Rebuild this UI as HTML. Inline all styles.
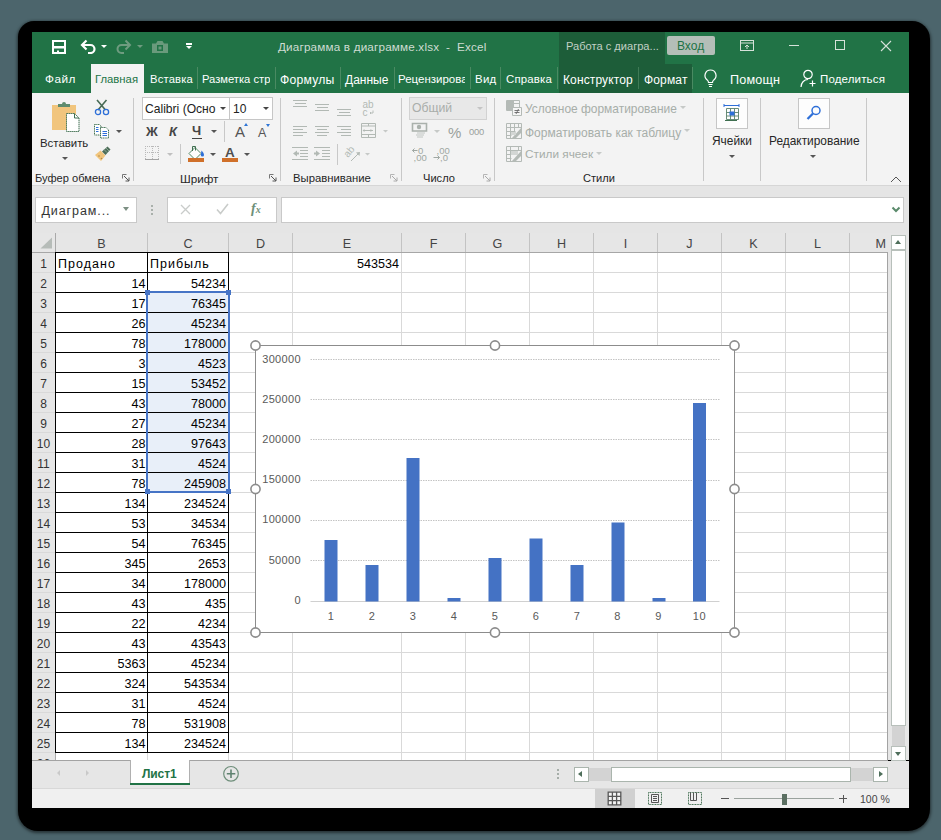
<!DOCTYPE html>
<html><head><meta charset="utf-8">
<style>
*{margin:0;padding:0;box-sizing:border-box}
html,body{width:941px;height:840px;overflow:hidden;background:#4c656c;font-family:"Liberation Sans",sans-serif;position:relative}
.a{position:absolute}
.t{position:absolute;white-space:nowrap;line-height:1}
#shadow{left:17.5px;top:21px;width:912px;height:810px;background:#000;border-radius:16px 18px 22px 20px;box-shadow:0 1px 3px 1px rgba(0,0,0,.5)}
</style></head><body>
<div id="shadow" class="a"></div>
<!-- title bar + tabs -->
<div class="a" style="left:32px;top:32px;width:877px;height:61px;background:#217346"></div>
<div class="a" style="left:559px;top:32px;width:106px;height:32px;background:#1d5d39"></div>
<div class="a" style="left:559px;top:64px;width:133px;height:29px;background:#1d5d39"></div>
<!-- ===== TITLE BAR ===== -->
<svg class="a" style="left:51px;top:39px" width="17" height="16" viewBox="0 0 17 16">
 <path d="M2 2h12v12H2z" fill="none" stroke="#fff" stroke-width="2"/>
 <rect x="1" y="7" width="14" height="2.5" fill="#fff"/>
 <rect x="6" y="11.5" width="2" height="3" fill="#fff"/>
</svg>
<svg class="a" style="left:80px;top:39px" width="17" height="15" viewBox="0 0 17 15">
 <path d="M2 6h8.5a4 4 0 0 1 0 8H8" fill="none" stroke="#fff" stroke-width="2.2"/>
 <path d="M6.5 1.5L2 6l4.5 4.5" fill="none" stroke="#fff" stroke-width="2.2"/>
</svg>
<div class="a" style="left:101px;top:45px;width:0;height:0;border-left:3px solid transparent;border-right:3px solid transparent;border-top:3px solid #fff"></div>
<svg class="a" style="left:115px;top:39px" width="17" height="15" viewBox="0 0 17 15">
 <path d="M15 6H6.5a4 4 0 0 0 0 8H9" fill="none" stroke="#6f9c80" stroke-width="2"/>
 <path d="M10.5 1.5L15 6l-4.5 4.5" fill="none" stroke="#6f9c80" stroke-width="2"/>
</svg>
<div class="a" style="left:137px;top:45px;width:0;height:0;border-left:3px solid transparent;border-right:3px solid transparent;border-top:3px solid #6f9c80"></div>
<svg class="a" style="left:151px;top:40px" width="18" height="14" viewBox="0 0 18 14">
 <path d="M1 3.5h4l1.5-2.5h5l1.5 2.5h4v9.5h-16z" fill="#6a9a7c"/>
 <rect x="6" y="5" width="6" height="6" fill="#217346"/><rect x="7.5" y="6.5" width="3" height="3" fill="#6a9a7c"/>
</svg>
<div class="a" style="left:186px;top:43px;width:6px;height:1.5px;background:#fff"></div>
<div class="a" style="left:186px;top:46px;width:0;height:0;border-left:3px solid transparent;border-right:3px solid transparent;border-top:3.5px solid #fff"></div>

<div class="t" style="left:278px;top:41px;font-size:11.7px;letter-spacing:0.18px;color:#cfdcd3">Диаграмма в диаграмме.xlsx&nbsp; - &nbsp;Excel</div>
<div class="t" style="left:566px;top:41px;font-size:11.1px;color:#c2d0c6">Работа с диагра...</div>
<div class="a" style="left:667px;top:36px;width:48px;height:19px;background:#b4beb8;border-radius:2px"></div>
<div class="t" style="left:677px;top:40px;font-size:12px;color:#217346">Вход</div>
<!-- ribbon display options -->
<svg class="a" style="left:740px;top:40px" width="15" height="12" viewBox="0 0 15 12">
 <rect x="0.5" y="0.5" width="13" height="10" fill="none" stroke="#d6e2da" stroke-width="1"/>
 <path d="M0.5 3h13" stroke="#d6e2da"/><path d="M7 9V5M5 7l2-2 2 2" fill="none" stroke="#d6e2da"/>
</svg>
<div class="a" style="left:789px;top:45px;width:10px;height:1px;background:#d6e2da"></div>
<div class="a" style="left:835px;top:40px;width:10px;height:10px;border:1px solid #d6e2da"></div>
<svg class="a" style="left:880px;top:40px" width="12" height="12" viewBox="0 0 12 12">
 <path d="M1 1l10 10M11 1L1 11" stroke="#d6e2da" stroke-width="1.1"/>
</svg>

<!-- ===== TABS ===== -->
<div class="a" style="left:91px;top:64px;width:53px;height:29px;background:#f3f3f3"></div>
<div class="t" style="left:45px;top:74px;font-size:11.8px;letter-spacing:0.5px;color:#fff">Файл</div>
<div class="t" style="left:95px;top:74px;font-size:11.3px;color:#217346">Главная</div>
<div class="t" style="left:150px;top:74px;font-size:11.2px;letter-spacing:0.2px;color:#fff">Вставка</div>
<div class="a" style="left:202px;top:64px;width:68px;height:29px;overflow:hidden"><div class="t" style="left:0;top:10px;font-size:11.2px;color:#fff">Разметка страницы</div></div>
<div class="t" style="left:280px;top:74px;font-size:12.2px;letter-spacing:0.2px;color:#fff">Формулы</div>
<div class="t" style="left:345px;top:74px;font-size:12px;color:#fff">Данные</div>
<div class="a" style="left:398px;top:64px;width:67px;height:29px;overflow:hidden"><div class="t" style="left:0;top:10px;font-size:11.5px;color:#fff">Рецензирование</div></div>
<div class="t" style="left:475px;top:74px;font-size:11.4px;letter-spacing:0.3px;color:#fff">Вид</div>
<div class="t" style="left:506px;top:74px;font-size:11.4px;letter-spacing:0.2px;color:#fff">Справка</div>
<div class="t" style="left:563px;top:74px;font-size:12px;letter-spacing:0.12px;color:#fff">Конструктор</div>
<div class="t" style="left:644px;top:74px;font-size:12px;letter-spacing:0.15px;color:#fff">Формат</div>
<div class="a" style="left:197px;top:67px;width:1px;height:22px;background:#4a8a62"></div>
<div class="a" style="left:275px;top:67px;width:1px;height:22px;background:#4a8a62"></div>
<div class="a" style="left:340px;top:67px;width:1px;height:22px;background:#4a8a62"></div>
<div class="a" style="left:394px;top:67px;width:1px;height:22px;background:#4a8a62"></div>
<div class="a" style="left:470px;top:67px;width:1px;height:22px;background:#4a8a62"></div>
<div class="a" style="left:500px;top:67px;width:1px;height:22px;background:#4a8a62"></div>
<div class="a" style="left:557px;top:67px;width:1px;height:22px;background:#4a8a62"></div>
<div class="a" style="left:638px;top:67px;width:1px;height:22px;background:#3f7a56"></div>
<div class="a" style="left:692px;top:67px;width:1px;height:22px;background:#4a8a62"></div>
<!-- lightbulb -->
<svg class="a" style="left:703px;top:69px" width="15" height="19" viewBox="0 0 15 19">
 <path d="M7.5 1a5.5 5.5 0 0 0-3.3 9.9c.8.7 1.3 1.6 1.3 2.6h4c0-1 .5-1.9 1.3-2.6A5.5 5.5 0 0 0 7.5 1z" fill="none" stroke="#fff" stroke-width="1.2"/>
 <path d="M5.5 15.5h4M6 17.5h3" stroke="#fff" stroke-width="1.1"/>
</svg>
<div class="t" style="left:730px;top:74px;font-size:12.6px;letter-spacing:0.2px;color:#fff">Помощн</div>
<!-- person -->
<svg class="a" style="left:800px;top:69px" width="17" height="19" viewBox="0 0 17 19">
 <circle cx="8" cy="5.5" r="4.2" fill="none" stroke="#fff" stroke-width="1.2"/>
 <path d="M1 18c0-4 3-7.5 7-7.5" fill="none" stroke="#fff" stroke-width="1.2"/>
 <path d="M12.5 11.5v6M9.5 14.5h6" stroke="#fff" stroke-width="1.2"/>
</svg>
<div class="t" style="left:820px;top:74px;font-size:11.5px;letter-spacing:0.15px;color:#fff">Поделиться</div>

<!-- ribbon -->
<div class="a" style="left:32px;top:93px;width:877px;height:93px;background:#f3f3f3;border-bottom:1px solid #d6d6d6"></div>
<!-- ===== RIBBON: Clipboard ===== -->
<svg class="a" style="left:50px;top:100px" width="34" height="34" viewBox="0 0 34 34">
 <rect x="2" y="5" width="24" height="25" fill="#f1c57d"/>
 <path d="M8 4h4a2 2 0 0 1 4 0h4v3H8z" fill="#5e8c6e"/>
 <path d="M16.5 13.5h8l4.5 4.5v13.5h-12.5z" fill="#fff" stroke="#3f6f50" stroke-width="1" stroke-dasharray="1.4 0.6"/>
 <path d="M24.5 13.5v4.5h4.5" fill="none" stroke="#3f6f50" stroke-width="1"/>
</svg>
<div class="t" style="left:40px;top:138px;font-size:11.4px;color:#262626">Вставить</div>
<div class="a" style="left:62px;top:157px;border-left:3px solid transparent;border-right:3px solid transparent;border-top:3px solid #555"></div>
<svg class="a" style="left:93px;top:99px" width="18" height="17" viewBox="0 0 18 17">
 <path d="M4 1l8.5 10M13.5 1L5 11" stroke="#486b55" stroke-width="1.6"/>
 <circle cx="5" cy="13" r="2.6" fill="none" stroke="#2e6fd8" stroke-width="1.3"/>
 <circle cx="13" cy="13" r="2.6" fill="none" stroke="#2e6fd8" stroke-width="1.3"/>
</svg>
<svg class="a" style="left:93px;top:123px" width="18" height="16" viewBox="0 0 18 16">
 <path d="M1.5 1.5h5l1.5 1.5v9h-6.5z" fill="#fff" stroke="#3f6f50" stroke-dasharray="1.2 0.6"/>
 <path d="M7.5 4.5h5.5l2.5 2.5v8h-8z" fill="#fff" stroke="#3f6f50" stroke-dasharray="1.2 0.6"/>
 <path d="M3 4.5h2.5M3 6.5h2.5M3 8.5h2.5" stroke="#2e6fd8"/>
 <path d="M9.5 8.5h4.5M9.5 10.5h4.5M9.5 12.5h4.5" stroke="#2e6fd8"/>
</svg>
<div class="a" style="left:116px;top:130px;border-left:3px solid transparent;border-right:3px solid transparent;border-top:3px solid #555"></div>
<svg class="a" style="left:94px;top:146px" width="17" height="16" viewBox="0 0 17 16">
 <path d="M1 9l5.5-4.5 5 5L7 15z" fill="#f1c57d"/>
 <path d="M8 5.5l5.5-5 3 3-5 5.5z" fill="#4d6e59"/>
 <path d="M10 3.5l3 3M12 2l3 3" stroke="#9db5a5" stroke-width="0.8"/>
 <circle cx="5" cy="10" r="0.8" fill="#b08a4a"/><circle cx="7.5" cy="12.5" r="0.8" fill="#b08a4a"/>
</svg>
<div class="t" style="left:35px;top:173px;font-size:11.1px;color:#262626">Буфер обмена</div>
<svg class="a" style="left:122px;top:174px" width="8" height="8" viewBox="0 0 8 8">
 <path d="M0.5 0.5h4M0.5 0.5v4" stroke="#777" fill="none"/><path d="M2 2l5 5M7 3.5V7H3.5" stroke="#555" fill="none"/>
</svg>
<div class="a" style="left:133px;top:98px;width:1px;height:83px;background:#c8c8c8"></div>

<!-- ===== RIBBON: Font ===== -->
<div class="a" style="left:142px;top:97px;width:88px;height:23px;background:#fff;border:1px solid #c6c6c6"></div>
<div class="a" style="left:229px;top:97px;width:44px;height:23px;background:#fff;border:1px solid #c6c6c6"></div>
<div class="t" style="left:145px;top:103px;font-size:12.1px;color:#222">Calibri (Осно</div>
<div class="t" style="left:233px;top:103px;font-size:12px;color:#222">10</div>
<div class="a" style="left:220px;top:107px;border-left:3px solid transparent;border-right:3px solid transparent;border-top:3px solid #444"></div>
<div class="a" style="left:263px;top:107px;border-left:3px solid transparent;border-right:3px solid transparent;border-top:3px solid #444"></div>
<div class="t" style="left:146px;top:125px;font-size:13px;font-weight:bold;color:#454545">Ж</div>
<div class="t" style="left:169px;top:125px;font-size:13px;font-weight:bold;font-style:italic;color:#454545">К</div>
<div class="t" style="left:192px;top:124px;font-size:13px;font-weight:bold;color:#454545">Ч</div>
<div class="a" style="left:192px;top:138px;width:10px;height:1px;background:#454545"></div>
<div class="a" style="left:211px;top:130px;border-left:3px solid transparent;border-right:3px solid transparent;border-top:3px solid #555"></div>
<div class="a" style="left:224px;top:121px;width:1px;height:21px;background:#c8c8c8"></div>
<div class="t" style="left:235px;top:124px;font-size:15px;color:#555">A</div>
<div class="a" style="left:244px;top:123px;border-left:2.5px solid transparent;border-right:2.5px solid transparent;border-bottom:3px solid #2e75d6"></div>
<div class="t" style="left:258px;top:127px;font-size:12.5px;color:#555">A</div>
<div class="a" style="left:266px;top:124px;border-left:2.5px solid transparent;border-right:2.5px solid transparent;border-top:3px solid #2e75d6"></div>
<!-- borders -->
<svg class="a" style="left:145px;top:146px" width="15" height="14" viewBox="0 0 15 14">
 <path d="M0.5 0v13M7.5 0v13M13.5 0v13M0 0.5h14M0 6.5h14" fill="none" stroke="#b9b9b9" stroke-dasharray="1 1"/>
 <path d="M0 13.5h14" stroke="#a3a3a3"/>
</svg>
<div class="a" style="left:167px;top:153px;border-left:3px solid transparent;border-right:3px solid transparent;border-top:3px solid #c0c0c0"></div>
<div class="a" style="left:180px;top:144px;width:1px;height:20px;background:#c8c8c8"></div>
<!-- fill -->
<svg class="a" style="left:188px;top:145px" width="17" height="17" viewBox="0 0 17 17">
 <path d="M1 8.5l6-6 6 6-6 6z" fill="#fff" stroke="#3f7a55" stroke-width="0.9"/>
 <path d="M4.5 6V1.5h3v4" fill="none" stroke="#3f6f50" stroke-width="1"/>
 <path d="M13.5 5.5c1.5 1.5 2.5 3 2.5 4.5a1.6 1.6 0 0 1-3.2 0z" fill="#2e6fd8"/>
 <rect x="0" y="13" width="16" height="4" fill="#d0702a"/>
</svg>
<div class="a" style="left:210px;top:153px;border-left:3px solid transparent;border-right:3px solid transparent;border-top:3px solid #555"></div>
<div class="t" style="left:225px;top:146px;font-size:13.5px;font-weight:bold;color:#4f4f4f">A</div>
<div class="a" style="left:222px;top:158px;width:16px;height:4px;background:#d0702a"></div>
<div class="a" style="left:244px;top:153px;border-left:3px solid transparent;border-right:3px solid transparent;border-top:3px solid #555"></div>
<div class="t" style="left:180px;top:173px;font-size:11.7px;color:#262626">Шрифт</div>
<svg class="a" style="left:269px;top:174px" width="8" height="8" viewBox="0 0 8 8">
 <path d="M0.5 0.5h4M0.5 0.5v4" stroke="#777" fill="none"/><path d="M2 2l5 5M7 3.5V7H3.5" stroke="#555" fill="none"/>
</svg>
<div class="a" style="left:280px;top:98px;width:1px;height:83px;background:#c8c8c8"></div>

<!-- ===== RIBBON: Alignment ===== -->
<svg class="a" style="left:285px;top:96px" width="115" height="70" viewBox="285 96 115 70">
 <g stroke="#b2b9b4" stroke-width="1" fill="none">
  <path d="M293 100.5h14M295 103.5h11M293 106.5h14"/>
  <path d="M315 104.5h14M317 107.5h11M315 110.5h14"/>
  <path d="M337 109.5h14M339 112.5h11M337 115.5h14"/>
  <path d="M293 126.5h14M293 129.5h10M293 132.5h14M293 135.5h10"/>
  <path d="M315 126.5h14M317 129.5h10M315 132.5h14M317 135.5h10"/>
  <path d="M337 126.5h14M341 129.5h10M337 132.5h14M341 135.5h10"/>
  <path d="M361.5 123.5h14v14h-14zM361.5 126h14M361.5 134.5h14M368.5 123.5v2.5M368.5 134.5v3M364 130.5h9"/>
  <path d="M292 147.5h16M300 150.5h8M300 153.5h8M300 156.5h8M292 159.5h16"/>
  <path d="M314 147.5h16M322 150.5h8M322 153.5h8M322 156.5h8M314 159.5h16"/>
  <path d="M351 161l8-8"/>
 </g>
 <path d="M364.5 129l-2 1.5 2 1.5zM370.5 129l2 1.5-2 1.5z" fill="#b2b9b4"/>
 <path d="M293 153.5l4-3v2h2v2h-2v2z" fill="#b2b9b4"/>
 <path d="M320 153.5l-4-3v2h-2v2h2v2z" fill="#b2b9b4"/>
 <path d="M360 152l-4 0.5 3.5 3.5z" fill="#b2b9b4"/>
 <text x="362.5" y="108" font-family="Liberation Sans" font-size="10" fill="#b2b9b4">ab</text>
 <text x="362.5" y="115.5" font-family="Liberation Sans" font-size="10" fill="#b2b9b4">c</text>
 <path d="M373 110.5v2.5h-3M371 112l-1 1 1 1" stroke="#b2b9b4" fill="none" stroke-width="0.9"/>
 <text x="0" y="0" transform="translate(348 158) rotate(-50)" font-family="Liberation Sans" font-size="10" fill="#b2b9b4">ab</text>
 <path d="M383 130l2.5 2.5 2.5-2.5zM365 153l2.5 2.5 2.5-2.5z" fill="#c6c9c7"/>
</svg>
<div class="a" style="left:337px;top:144px;width:1px;height:21px;background:#c8c8c8"></div>
<div class="t" style="left:293px;top:173px;font-size:11.3px;color:#262626">Выравнивание</div>
<svg class="a" style="left:390px;top:174px" width="8" height="8" viewBox="0 0 8 8">
 <path d="M0.5 0.5h4M0.5 0.5v4" stroke="#b5b5b5" fill="none"/><path d="M2 2l5 5M7 3.5V7H3.5" stroke="#aaa" fill="none"/>
</svg>
<div class="a" style="left:401px;top:98px;width:1px;height:83px;background:#c8c8c8"></div>

<!-- ===== RIBBON: Number ===== -->
<div class="a" style="left:409px;top:97px;width:78px;height:23px;background:#e8e8e8;border:1px solid #d2d2d2"></div>
<div class="t" style="left:412px;top:102px;font-size:12.2px;color:#a9adaa">Общий</div>
<div class="a" style="left:477px;top:107px;border-left:3px solid transparent;border-right:3px solid transparent;border-top:3px solid #c4c4c4"></div>
<svg class="a" style="left:411px;top:122px" width="18" height="18" viewBox="0 0 18 18">
 <path d="M1.5 1.5h14v7.5h-14z" fill="none" stroke="#aab1ac" stroke-width="1.6"/>
 <circle cx="8" cy="5" r="2.2" fill="#aab1ac"/>
 <path d="M6 11h8M5 13h8M6 15h6" stroke="#c0c5c2" stroke-width="1"/>
</svg>
<div class="a" style="left:434px;top:130px;border-left:3px solid transparent;border-right:3px solid transparent;border-top:3px solid #c6c9c7"></div>
<div class="t" style="left:448px;top:125px;font-size:15px;color:#9aa19c">%</div>
<div class="t" style="left:469px;top:127px;font-size:9.4px;letter-spacing:-0.2px;color:#9aa19c">000</div>
<svg class="a" style="left:411px;top:146px" width="40" height="17" viewBox="0 0 40 17">
 <text x="7" y="8" font-family="Liberation Sans" font-size="9.5" fill="#9fa7a2">0</text>
 <text x="2.5" y="15" font-family="Liberation Sans" font-size="9.5" fill="#9fa7a2">,00</text>
 <path d="M1.5 4.5h5M3.5 2.5l-2 2 2 2" stroke="#9fa7a2" fill="none"/>
 <text x="25.5" y="8" font-family="Liberation Sans" font-size="9.5" fill="#9fa7a2">,00</text>
 <text x="29" y="15" font-family="Liberation Sans" font-size="9.5" fill="#9fa7a2">,0</text>
 <path d="M22.5 11.5h6M26.5 9.5l2 2-2 2" stroke="#9fa7a2" fill="none"/>
</svg>
<div class="t" style="left:423px;top:173px;font-size:11.1px;color:#262626">Число</div>
<svg class="a" style="left:483px;top:174px" width="8" height="8" viewBox="0 0 8 8">
 <path d="M0.5 0.5h4M0.5 0.5v4" stroke="#b5b5b5" fill="none"/><path d="M2 2l5 5M7 3.5V7H3.5" stroke="#aaa" fill="none"/>
</svg>
<div class="a" style="left:494px;top:98px;width:1px;height:83px;background:#c8c8c8"></div>

<!-- ===== RIBBON: Styles ===== -->
<svg class="a" style="left:505px;top:99px" width="19" height="64" viewBox="505 99 19 64">
 <g fill="none" stroke="#b4bab6" stroke-width="1">
  <path d="M506.5 100.5h13v10h-13zM513.5 100.5v7M513 103.5h6.5"/>
  <path d="M512.5 107.5h9v8h-9z" fill="#f5f5f5"/>
  <path d="M506.5 123.5h15v15h-15zM506.5 127.5h15M506.5 131.5h9M506.5 135.5h5M510.5 123.5v15M514.5 123.5v8M518.5 123.5v4"/>
  <path d="M506.5 146.5h15v15h-15zM506.5 150.5h15M506.5 154.5h9M506.5 158.5h5M510.5 146.5v15M518.5 146.5v4"/>
 </g>
 <rect x="507" y="101" width="6" height="10" fill="#b4bab6"/>
 <path d="M514.5 110.5h5M514.5 112.5h5M518.5 109l-2.5 5" stroke="#6a6a6a" stroke-width="0.9" fill="none"/>
 <path d="M522 127l-10 11h4l6-6z" fill="#b4bab6"/>
 <path d="M522 150l-10 11h4l6-6z" fill="#b4bab6"/>
 <rect x="511" y="132" width="5" height="3" fill="#d3d6d4"/><rect x="511" y="151" width="7" height="4" fill="#d3d6d4"/>
</svg>
<div class="t" style="left:525px;top:104px;font-size:11.95px;color:#a7aea9">Условное форматирование</div>
<div class="a" style="left:680px;top:106px;border-left:3px solid transparent;border-right:3px solid transparent;border-top:3px solid #c6c9c7"></div>
<div class="t" style="left:525px;top:127px;font-size:12px;color:#a7aea9">Форматировать как таблицу</div>
<div class="a" style="left:684px;top:129px;border-left:3px solid transparent;border-right:3px solid transparent;border-top:3px solid #c6c9c7"></div>
<div class="t" style="left:525px;top:149px;font-size:11.8px;color:#a7aea9">Стили ячеек</div>
<div class="a" style="left:596px;top:152px;border-left:3px solid transparent;border-right:3px solid transparent;border-top:3px solid #c6c9c7"></div>
<div class="t" style="left:583px;top:173px;font-size:11.1px;color:#262626">Стили</div>
<div class="a" style="left:703px;top:98px;width:1px;height:83px;background:#c8c8c8"></div>

<!-- ===== RIBBON: Cells / Editing ===== -->
<div class="a" style="left:716px;top:98px;width:32px;height:31px;background:#fdfdfd;border:1px solid #c6c6c6"></div>
<svg class="a" style="left:723px;top:103px" width="18" height="20" viewBox="0 0 18 20">
 <path d="M1 2.5h15M1 1v3M16 1v3" stroke="#2e6fd8" stroke-width="1"/>
 <path d="M3.5 5.5h12v11h-12zM3.5 9.5h12M3.5 13h12M7.5 5.5v11M11.5 5.5v11" fill="none" stroke="#58806a" stroke-width="0.9"/>
 <rect x="6.5" y="8.5" width="5" height="4" fill="#2e6fd8"/>
 <path d="M2 17.5h12" stroke="#3f6f50" stroke-width="1"/>
</svg>
<div class="t" style="left:712px;top:136px;font-size:11.9px;color:#262626">Ячейки</div>
<div class="a" style="left:729px;top:155px;border-left:3px solid transparent;border-right:3px solid transparent;border-top:3px solid #555"></div>
<div class="a" style="left:760px;top:98px;width:1px;height:83px;background:#c8c8c8"></div>
<div class="a" style="left:798px;top:98px;width:32px;height:31px;background:#fdfdfd;border:1px solid #c6c6c6"></div>
<svg class="a" style="left:805px;top:104px" width="18" height="18" viewBox="0 0 18 18">
 <circle cx="11" cy="6.5" r="4" fill="none" stroke="#2e6fd8" stroke-width="1.5"/>
 <path d="M8 9.5L2.5 15" stroke="#2e6fd8" stroke-width="2.3"/>
</svg>
<div class="t" style="left:769px;top:136px;font-size:11.9px;color:#262626">Редактирование</div>
<div class="a" style="left:810px;top:155px;border-left:3px solid transparent;border-right:3px solid transparent;border-top:3px solid #555"></div>
<div class="a" style="left:866px;top:98px;width:1px;height:83px;background:#c8c8c8"></div>
<svg class="a" style="left:890px;top:176px" width="12" height="7" viewBox="0 0 12 7">
 <path d="M1 6l5-5 5 5" fill="none" stroke="#444" stroke-width="0.9"/>
</svg>

<!-- formula bar -->
<div class="a" style="left:32px;top:186px;width:877px;height:47px;background:#e5e5e5"></div>
<div class="a" style="left:32px;top:233px;width:877px;height:527px;background:#e6e6e6"></div>
<div class="a" style="left:55px;top:253px;width:833px;height:507px;background:#fff"></div>
<!-- ===== FORMULA BAR ===== -->
<div class="a" style="left:35px;top:197px;width:102px;height:26px;background:#fff;border:1px solid #c9c9c9"></div>
<div class="t" style="left:41.5px;top:205px;font-size:12.5px;letter-spacing:0.9px;color:#333">Диаграм...</div>
<div class="a" style="left:123px;top:207px;border-left:3.5px solid transparent;border-right:3.5px solid transparent;border-top:4px solid #7c8f83"></div>
<div class="a" style="left:151px;top:205px;width:2px;height:2px;background:#a9b0ab"></div>
<div class="a" style="left:151px;top:209px;width:2px;height:2px;background:#a9b0ab"></div>
<div class="a" style="left:151px;top:213px;width:2px;height:2px;background:#a9b0ab"></div>
<div class="a" style="left:167px;top:197px;width:110px;height:26px;background:#fff;border:1px solid #c9c9c9"></div>
<svg class="a" style="left:180px;top:204px" width="11" height="11" viewBox="0 0 11 11"><path d="M1 1l9 9M10 1l-9 9" stroke="#c9ccca" stroke-width="1.3"/></svg>
<svg class="a" style="left:216px;top:203px" width="13" height="12" viewBox="0 0 13 12"><path d="M1 6.5l3.5 4L12 1" fill="none" stroke="#c9ccca" stroke-width="1.6"/></svg>
<div class="t" style="left:251px;top:202px;font-family:'Liberation Serif',serif;font-size:14px;font-style:italic;font-weight:bold;color:#6d8f79">f<span style="font-size:10px">x</span></div>
<div class="a" style="left:281px;top:197px;width:623px;height:26px;background:#fff;border:1px solid #c9c9c9"></div>
<svg class="a" style="left:891px;top:206px" width="10" height="7" viewBox="0 0 10 7"><path d="M1.5 1.5l3.5 3.5 3.5-3.5" fill="none" stroke="#5a8a6b" stroke-width="2"/></svg>
<!-- ===== HEADERS ===== -->
<div class="a" style="left:32px;top:233px;width:856px;height:20px;background:#e6e6e6"></div>
<div class="a" style="left:32px;top:252px;width:856px;height:1px;background:#a6a6a6"></div>
<svg class="a" style="left:40px;top:237px" width="13" height="12" viewBox="0 0 13 12"><path d="M12 0.5V11.5H0.5z" fill="#b6bcb8"/></svg>
<div class="a" style="left:55px;top:233px;width:1px;height:19px;background:#c3c3c3"></div>
<div class="t" style="left:55.5px;width:92.0px;top:237.5px;text-align:center;font-size:12.6px;color:#444">B</div>
<div class="a" style="left:147px;top:233px;width:1px;height:19px;background:#c3c3c3"></div>
<div class="t" style="left:147.5px;width:81.0px;top:237.5px;text-align:center;font-size:12.6px;color:#444">C</div>
<div class="a" style="left:228px;top:233px;width:1px;height:19px;background:#c3c3c3"></div>
<div class="t" style="left:228.5px;width:64.0px;top:237.5px;text-align:center;font-size:12.6px;color:#444">D</div>
<div class="a" style="left:292px;top:233px;width:1px;height:19px;background:#c3c3c3"></div>
<div class="t" style="left:292.5px;width:109.0px;top:237.5px;text-align:center;font-size:12.6px;color:#444">E</div>
<div class="a" style="left:401px;top:233px;width:1px;height:19px;background:#c3c3c3"></div>
<div class="t" style="left:401.5px;width:64.0px;top:237.5px;text-align:center;font-size:12.6px;color:#444">F</div>
<div class="a" style="left:465px;top:233px;width:1px;height:19px;background:#c3c3c3"></div>
<div class="t" style="left:465.5px;width:64.0px;top:237.5px;text-align:center;font-size:12.6px;color:#444">G</div>
<div class="a" style="left:529px;top:233px;width:1px;height:19px;background:#c3c3c3"></div>
<div class="t" style="left:529.5px;width:64.0px;top:237.5px;text-align:center;font-size:12.6px;color:#444">H</div>
<div class="a" style="left:593px;top:233px;width:1px;height:19px;background:#c3c3c3"></div>
<div class="t" style="left:593.5px;width:64.0px;top:237.5px;text-align:center;font-size:12.6px;color:#444">I</div>
<div class="a" style="left:657px;top:233px;width:1px;height:19px;background:#c3c3c3"></div>
<div class="t" style="left:657.5px;width:64.0px;top:237.5px;text-align:center;font-size:12.6px;color:#444">J</div>
<div class="a" style="left:721px;top:233px;width:1px;height:19px;background:#c3c3c3"></div>
<div class="t" style="left:721.5px;width:64.0px;top:237.5px;text-align:center;font-size:12.6px;color:#444">K</div>
<div class="a" style="left:785px;top:233px;width:1px;height:19px;background:#c3c3c3"></div>
<div class="t" style="left:785.5px;width:64.0px;top:237.5px;text-align:center;font-size:12.6px;color:#444">L</div>
<div class="a" style="left:849px;top:233px;width:1px;height:19px;background:#c3c3c3"></div>
<div class="t" style="left:875.5px;top:237.5px;font-size:12.6px;color:#444">M</div>
<div class="a" style="left:32px;top:253px;width:23px;height:507px;background:#e6e6e6"></div>
<div class="a" style="left:55px;top:233px;width:1px;height:527px;background:#a9a9a9"></div>
<!-- ===== GRID ===== -->
<svg class="a" style="left:0;top:0" width="941" height="840"><path d="M32 272.5H888M32 292.5H888M32 312.5H888M32 332.5H888M32 352.5H888M32 372.5H888M32 392.5H888M32 412.5H888M32 432.5H888M32 452.5H888M32 472.5H888M32 492.5H888M32 512.5H888M32 532.5H888M32 552.5H888M32 572.5H888M32 592.5H888M32 612.5H888M32 632.5H888M32 652.5H888M32 672.5H888M32 692.5H888M32 712.5H888M32 732.5H888M32 752.5H888M147.5 253V760M228.5 253V760M292.5 253V760M401.5 253V760M465.5 253V760M529.5 253V760M593.5 253V760M657.5 253V760M721.5 253V760M785.5 253V760M849.5 253V760" stroke="#d9d9d9" stroke-width="1" fill="none"/></svg>
<div class="a" style="left:148px;top:293px;width:80px;height:199px;background:#e8eff9"></div>
<svg class="a" style="left:0;top:0" width="941" height="840"><path d="M55 252.5H229M55 272.5H229M55 292.5H229M55 312.5H229M55 332.5H229M55 352.5H229M55 372.5H229M55 392.5H229M55 412.5H229M55 432.5H229M55 452.5H229M55 472.5H229M55 492.5H229M55 512.5H229M55 532.5H229M55 552.5H229M55 572.5H229M55 592.5H229M55 612.5H229M55 632.5H229M55 652.5H229M55 672.5H229M55 692.5H229M55 712.5H229M55 732.5H229M55 752.5H229M55.5 252V753M147.5 252V753M228.5 252V753" stroke="#000" stroke-width="1" fill="none"/></svg>
<div class="t" style="left:32px;width:23px;top:258px;text-align:center;font-size:12px;color:#333">1</div>
<div class="t" style="left:32px;width:23px;top:278px;text-align:center;font-size:12px;color:#333">2</div>
<div class="t" style="left:32px;width:23px;top:298px;text-align:center;font-size:12px;color:#333">3</div>
<div class="t" style="left:32px;width:23px;top:318px;text-align:center;font-size:12px;color:#333">4</div>
<div class="t" style="left:32px;width:23px;top:338px;text-align:center;font-size:12px;color:#333">5</div>
<div class="t" style="left:32px;width:23px;top:358px;text-align:center;font-size:12px;color:#333">6</div>
<div class="t" style="left:32px;width:23px;top:378px;text-align:center;font-size:12px;color:#333">7</div>
<div class="t" style="left:32px;width:23px;top:398px;text-align:center;font-size:12px;color:#333">8</div>
<div class="t" style="left:32px;width:23px;top:418px;text-align:center;font-size:12px;color:#333">9</div>
<div class="t" style="left:32px;width:23px;top:438px;text-align:center;font-size:12px;color:#333">10</div>
<div class="t" style="left:32px;width:23px;top:458px;text-align:center;font-size:12px;color:#333">11</div>
<div class="t" style="left:32px;width:23px;top:478px;text-align:center;font-size:12px;color:#333">12</div>
<div class="t" style="left:32px;width:23px;top:498px;text-align:center;font-size:12px;color:#333">13</div>
<div class="t" style="left:32px;width:23px;top:518px;text-align:center;font-size:12px;color:#333">14</div>
<div class="t" style="left:32px;width:23px;top:538px;text-align:center;font-size:12px;color:#333">15</div>
<div class="t" style="left:32px;width:23px;top:558px;text-align:center;font-size:12px;color:#333">16</div>
<div class="t" style="left:32px;width:23px;top:578px;text-align:center;font-size:12px;color:#333">17</div>
<div class="t" style="left:32px;width:23px;top:598px;text-align:center;font-size:12px;color:#333">18</div>
<div class="t" style="left:32px;width:23px;top:618px;text-align:center;font-size:12px;color:#333">19</div>
<div class="t" style="left:32px;width:23px;top:638px;text-align:center;font-size:12px;color:#333">20</div>
<div class="t" style="left:32px;width:23px;top:658px;text-align:center;font-size:12px;color:#333">21</div>
<div class="t" style="left:32px;width:23px;top:678px;text-align:center;font-size:12px;color:#333">22</div>
<div class="t" style="left:32px;width:23px;top:698px;text-align:center;font-size:12px;color:#333">23</div>
<div class="t" style="left:32px;width:23px;top:718px;text-align:center;font-size:12px;color:#333">24</div>
<div class="t" style="left:32px;width:23px;top:738px;text-align:center;font-size:12px;color:#333">25</div>
<div class="t" style="left:32px;width:23px;top:758px;text-align:center;font-size:12px;color:#333">26</div>
<div class="t" style="left:58px;top:258px;font-size:12.5px;letter-spacing:1.05px;color:#000">Продано</div>
<div class="t" style="left:150px;top:258px;font-size:12.5px;letter-spacing:1.0px;color:#000">Прибыль</div>
<div class="t" style="left:293px;width:106px;top:258px;text-align:right;font-size:12.6px;color:#000">543534</div>
<div class="t" style="left:56px;width:89.5px;top:278px;text-align:right;font-size:12.6px;color:#000">14</div>
<div class="t" style="left:148px;width:78px;top:278px;text-align:right;font-size:12.6px;color:#000">54234</div>
<div class="t" style="left:56px;width:89.5px;top:298px;text-align:right;font-size:12.6px;color:#000">17</div>
<div class="t" style="left:148px;width:78px;top:298px;text-align:right;font-size:12.6px;color:#000">76345</div>
<div class="t" style="left:56px;width:89.5px;top:318px;text-align:right;font-size:12.6px;color:#000">26</div>
<div class="t" style="left:148px;width:78px;top:318px;text-align:right;font-size:12.6px;color:#000">45234</div>
<div class="t" style="left:56px;width:89.5px;top:338px;text-align:right;font-size:12.6px;color:#000">78</div>
<div class="t" style="left:148px;width:78px;top:338px;text-align:right;font-size:12.6px;color:#000">178000</div>
<div class="t" style="left:56px;width:89.5px;top:358px;text-align:right;font-size:12.6px;color:#000">3</div>
<div class="t" style="left:148px;width:78px;top:358px;text-align:right;font-size:12.6px;color:#000">4523</div>
<div class="t" style="left:56px;width:89.5px;top:378px;text-align:right;font-size:12.6px;color:#000">15</div>
<div class="t" style="left:148px;width:78px;top:378px;text-align:right;font-size:12.6px;color:#000">53452</div>
<div class="t" style="left:56px;width:89.5px;top:398px;text-align:right;font-size:12.6px;color:#000">43</div>
<div class="t" style="left:148px;width:78px;top:398px;text-align:right;font-size:12.6px;color:#000">78000</div>
<div class="t" style="left:56px;width:89.5px;top:418px;text-align:right;font-size:12.6px;color:#000">27</div>
<div class="t" style="left:148px;width:78px;top:418px;text-align:right;font-size:12.6px;color:#000">45234</div>
<div class="t" style="left:56px;width:89.5px;top:438px;text-align:right;font-size:12.6px;color:#000">28</div>
<div class="t" style="left:148px;width:78px;top:438px;text-align:right;font-size:12.6px;color:#000">97643</div>
<div class="t" style="left:56px;width:89.5px;top:458px;text-align:right;font-size:12.6px;color:#000">31</div>
<div class="t" style="left:148px;width:78px;top:458px;text-align:right;font-size:12.6px;color:#000">4524</div>
<div class="t" style="left:56px;width:89.5px;top:478px;text-align:right;font-size:12.6px;color:#000">78</div>
<div class="t" style="left:148px;width:78px;top:478px;text-align:right;font-size:12.6px;color:#000">245908</div>
<div class="t" style="left:56px;width:89.5px;top:498px;text-align:right;font-size:12.6px;color:#000">134</div>
<div class="t" style="left:148px;width:78px;top:498px;text-align:right;font-size:12.6px;color:#000">234524</div>
<div class="t" style="left:56px;width:89.5px;top:518px;text-align:right;font-size:12.6px;color:#000">53</div>
<div class="t" style="left:148px;width:78px;top:518px;text-align:right;font-size:12.6px;color:#000">34534</div>
<div class="t" style="left:56px;width:89.5px;top:538px;text-align:right;font-size:12.6px;color:#000">54</div>
<div class="t" style="left:148px;width:78px;top:538px;text-align:right;font-size:12.6px;color:#000">76345</div>
<div class="t" style="left:56px;width:89.5px;top:558px;text-align:right;font-size:12.6px;color:#000">345</div>
<div class="t" style="left:148px;width:78px;top:558px;text-align:right;font-size:12.6px;color:#000">2653</div>
<div class="t" style="left:56px;width:89.5px;top:578px;text-align:right;font-size:12.6px;color:#000">34</div>
<div class="t" style="left:148px;width:78px;top:578px;text-align:right;font-size:12.6px;color:#000">178000</div>
<div class="t" style="left:56px;width:89.5px;top:598px;text-align:right;font-size:12.6px;color:#000">43</div>
<div class="t" style="left:148px;width:78px;top:598px;text-align:right;font-size:12.6px;color:#000">435</div>
<div class="t" style="left:56px;width:89.5px;top:618px;text-align:right;font-size:12.6px;color:#000">22</div>
<div class="t" style="left:148px;width:78px;top:618px;text-align:right;font-size:12.6px;color:#000">4234</div>
<div class="t" style="left:56px;width:89.5px;top:638px;text-align:right;font-size:12.6px;color:#000">43</div>
<div class="t" style="left:148px;width:78px;top:638px;text-align:right;font-size:12.6px;color:#000">43543</div>
<div class="t" style="left:56px;width:89.5px;top:658px;text-align:right;font-size:12.6px;color:#000">5363</div>
<div class="t" style="left:148px;width:78px;top:658px;text-align:right;font-size:12.6px;color:#000">45234</div>
<div class="t" style="left:56px;width:89.5px;top:678px;text-align:right;font-size:12.6px;color:#000">324</div>
<div class="t" style="left:148px;width:78px;top:678px;text-align:right;font-size:12.6px;color:#000">543534</div>
<div class="t" style="left:56px;width:89.5px;top:698px;text-align:right;font-size:12.6px;color:#000">31</div>
<div class="t" style="left:148px;width:78px;top:698px;text-align:right;font-size:12.6px;color:#000">4524</div>
<div class="t" style="left:56px;width:89.5px;top:718px;text-align:right;font-size:12.6px;color:#000">78</div>
<div class="t" style="left:148px;width:78px;top:718px;text-align:right;font-size:12.6px;color:#000">531908</div>
<div class="t" style="left:56px;width:89.5px;top:738px;text-align:right;font-size:12.6px;color:#000">134</div>
<div class="t" style="left:148px;width:78px;top:738px;text-align:right;font-size:12.6px;color:#000">234524</div>
<div class="a" style="left:146px;top:291px;width:84px;height:202px;border:2px solid #4674c6"></div>
<div class="a" style="left:145px;top:290px;width:5px;height:5px;background:#4674c6"></div>
<div class="a" style="left:226px;top:290px;width:5px;height:5px;background:#4674c6"></div>
<div class="a" style="left:145px;top:489px;width:5px;height:5px;background:#4674c6"></div>
<div class="a" style="left:226px;top:489px;width:5px;height:5px;background:#4674c6"></div>
<!-- /grid -->
<!-- ===== CHART ===== -->
<svg class="a" style="left:0;top:0" width="941" height="840">
 <rect x="255.5" y="345.5" width="479" height="287" fill="#fff" stroke="#8c8c8c" stroke-width="1"/>
 <g stroke="#c4c4c4" stroke-width="1" stroke-dasharray="1.5 1">
  <path d="M310.5 359.5H719.5M310.5 399.5H719.5M310.5 439.5H719.5M310.5 480.5H719.5M310.5 520.5H719.5M310.5 560.5H719.5"/>
 </g>
 <path d="M310.5 601.5H719.5" stroke="#d0d0d0"/>
 <g fill="#4472c4">
  <rect x="324.5" y="540" width="13" height="61.5"/>
  <rect x="365.5" y="565" width="13" height="36.5"/>
  <rect x="406.5" y="458" width="13" height="143.5"/>
  <rect x="447.5" y="598" width="13" height="3.5"/>
  <rect x="488.5" y="558" width="13" height="43.5"/>
  <rect x="529.5" y="538.5" width="13" height="63"/>
  <rect x="570.5" y="565" width="13" height="36.5"/>
  <rect x="611.5" y="522.5" width="13" height="79"/>
  <rect x="652.5" y="598" width="13" height="3.5"/>
  <rect x="693" y="403" width="13" height="198.5"/>
 </g>
 <g font-family="Liberation Sans" font-size="11" letter-spacing="0.35" fill="#595959" text-anchor="end">
  <text x="301" y="362.5">300000</text>
  <text x="301" y="402.5">250000</text>
  <text x="301" y="442.5">200000</text>
  <text x="301" y="483">150000</text>
  <text x="301" y="523">100000</text>
  <text x="301" y="563.5">50000</text>
  <text x="301" y="604">0</text>
 </g>
 <g font-family="Liberation Sans" font-size="11" letter-spacing="0.6" fill="#595959" text-anchor="middle">
  <text x="331" y="620">1</text><text x="372" y="620">2</text><text x="413" y="620">3</text><text x="454" y="620">4</text><text x="495" y="620">5</text>
  <text x="536" y="620">6</text><text x="577" y="620">7</text><text x="617.5" y="620">8</text><text x="658.5" y="620">9</text><text x="699.5" y="620">10</text>
 </g>
 <g fill="#fff" stroke="#8c8c8c" stroke-width="1.6">
  <circle cx="255.5" cy="345.5" r="4.6"/><circle cx="495" cy="345.5" r="4.6"/><circle cx="734.5" cy="345.5" r="4.6"/>
  <circle cx="255.5" cy="489" r="4.6"/><circle cx="734.5" cy="489" r="4.6"/>
  <circle cx="255.5" cy="632.5" r="4.6"/><circle cx="495" cy="632.5" r="4.6"/><circle cx="734.5" cy="632.5" r="4.6"/>
 </g>
</svg>

<!-- ===== VERTICAL SCROLLBAR ===== -->
<div class="a" style="left:888px;top:233px;width:21px;height:527px;background:#e6e6e6"></div>
<div class="a" style="left:887px;top:252px;width:1px;height:509px;background:#a3a3a3"></div>
<div class="a" style="left:891px;top:235px;width:15px;height:16px;background:#fff;border:1px solid #b8c0bb;border-bottom-width:2px"></div>
<div class="a" style="left:895px;top:240px;border-left:3.5px solid transparent;border-right:3.5px solid transparent;border-bottom:4px solid #4e6e5a"></div>
<div class="a" style="left:891px;top:250px;width:15px;height:476px;background:#fff;border:1px solid #b8c0bb"></div>
<div class="a" style="left:892px;top:726px;width:13px;height:20px;background:#d3d3d3"></div>
<div class="a" style="left:891px;top:746px;width:15px;height:15px;background:#fff;border:1px solid #b8c0bb"></div>
<div class="a" style="left:895px;top:752px;border-left:3.5px solid transparent;border-right:3.5px solid transparent;border-top:4px solid #4e6e5a"></div>

<!-- ===== SHEET TABS BAR ===== -->
<div class="a" style="left:32px;top:761px;width:877px;height:27px;background:#e6e6e6"></div>
<div class="a" style="left:32px;top:760px;width:856px;height:1px;background:#a3a3a3"></div>
<div class="a" style="left:57px;top:770px;border-top:3.5px solid transparent;border-bottom:3.5px solid transparent;border-right:3.5px solid #c9c9c9"></div>
<div class="a" style="left:86px;top:770px;border-top:3.5px solid transparent;border-bottom:3.5px solid transparent;border-left:3.5px solid #c9c9c9"></div>
<div class="a" style="left:130px;top:760px;width:60px;height:25px;background:#fff;border-left:1px solid #b0b0b0;border-right:1px solid #b0b0b0"></div>
<div class="a" style="left:130px;top:783px;width:60px;height:2px;background:#217346"></div>
<div class="t" style="left:142px;top:768px;font-size:12px;font-weight:bold;letter-spacing:-0.1px;color:#217346">Лист1</div>
<svg class="a" style="left:222px;top:765px" width="18" height="18" viewBox="0 0 18 18">
 <circle cx="9" cy="8.8" r="7.3" fill="none" stroke="#6f8f7b" stroke-width="1.2"/>
 <path d="M9 4.5v8.5M4.8 8.8h8.5" stroke="#5f8270" stroke-width="1.6"/>
</svg>
<div class="a" style="left:557px;top:769px;width:2px;height:2px;background:#a5ada8"></div>
<div class="a" style="left:557px;top:773px;width:2px;height:2px;background:#a5ada8"></div>
<div class="a" style="left:557px;top:777px;width:2px;height:2px;background:#a5ada8"></div>
<div class="a" style="left:574px;top:767px;width:15px;height:15px;background:#fff;border:1px solid #aab5ad"></div>
<div class="a" style="left:578px;top:771px;border-top:3.5px solid transparent;border-bottom:3.5px solid transparent;border-right:4px solid #4e6e5a"></div>
<div class="a" style="left:589px;top:768px;width:22px;height:13px;background:#d3d3d3"></div>
<div class="a" style="left:611px;top:767px;width:240px;height:15px;background:#fff;border:1px solid #aab5ad"></div>
<div class="a" style="left:851px;top:768px;width:22px;height:13px;background:#d3d3d3"></div>
<div class="a" style="left:873px;top:767px;width:15px;height:15px;background:#fff;border:1px solid #aab5ad"></div>
<div class="a" style="left:879px;top:771px;border-top:3.5px solid transparent;border-bottom:3.5px solid transparent;border-left:4px solid #4e6e5a"></div>

<!-- ===== STATUS BAR ===== -->
<div class="a" style="left:32px;top:788px;width:877px;height:20px;background:#f0f0f0;border-top:1px solid #d8d8d8"></div>
<div class="a" style="left:595px;top:789px;width:40px;height:19px;background:#d0d0d0"></div>
<svg class="a" style="left:607px;top:791px" width="15" height="15" viewBox="0 0 15 15">
 <rect x="1" y="1" width="13" height="13" fill="#f4f4f4"/>
 <path d="M1.2 1.2h12.6v12.6H1.2zM5.4 1v13M9.6 1v13M1 5.4h13M1 9.6h13" fill="none" stroke="#575757" stroke-width="1.3"/>
</svg>
<svg class="a" style="left:0;top:0" width="941" height="840">
 <g fill="none" stroke-width="1">
  <path d="M648.5 792.5h13v12h-13z" stroke="#3d6a4c" stroke-dasharray="1 0.6"/>
  <path d="M651.5 794.5h7v8h-7z" stroke="#555"/>
  <path d="M653 796.5h4M653 798.5h4M653 800.5h4" stroke="#555"/>
  <path d="M688.5 792.5h13v12h-13z" stroke="#3d6a4c" stroke-dasharray="1 0.6"/>
  <path d="M690.5 792.5v8h6v-8M693.5 792.5v8" stroke="#555"/>
 </g>
</svg>
<div class="a" style="left:721px;top:798px;width:8px;height:1px;background:#555"></div>
<div class="a" style="left:734px;top:798px;width:100px;height:1px;background:#9aa29d"></div>
<div class="a" style="left:782px;top:794px;width:5px;height:11px;background:#5b6f62"></div>
<div class="a" style="left:839px;top:798px;width:8px;height:1px;background:#555"></div>
<div class="a" style="left:842.5px;top:794.5px;width:1px;height:8px;background:#555"></div>
<div class="t" style="left:860px;top:794px;font-size:10.5px;color:#444">100 %</div>

</body></html>
